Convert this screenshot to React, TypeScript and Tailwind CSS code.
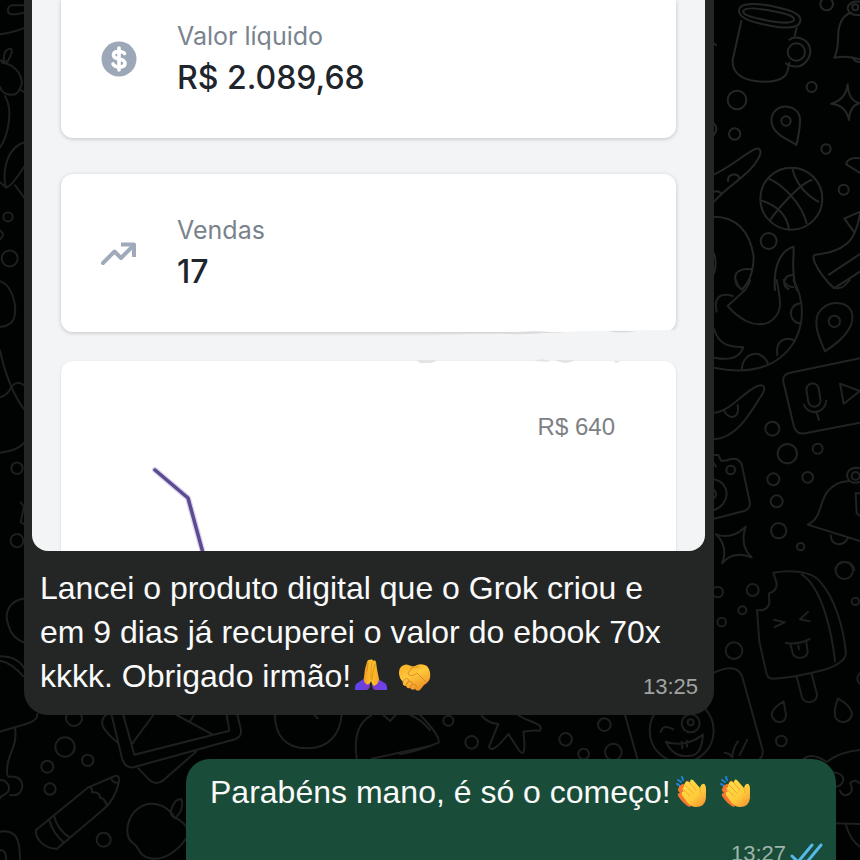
import type { ReactNode } from "react";

/** Doodle wallpaper behind the conversation */
function Wallpaper() {
  return (
    <svg
      className="absolute inset-0 h-full w-full [&_*]:[vector-effect:non-scaling-stroke]"
      viewBox="0 0 860 860"
      preserveAspectRatio="xMidYMid slice"
      fill="none"
      stroke="#1e201f"
      strokeWidth={2}
      strokeLinecap="round"
      strokeLinejoin="round"
      aria-hidden="true"
    >
      {/* mug, pin, ball, star */}
      <g transform="translate(700 0) scale(.33333)" stroke="#252726">
        <path d="M117 30C120 5 180 10 231 22C275 32 305 42 301 63C298 86 258 86 210 77C155 67 115 55 117 30Z" />
        <path d="M130 33C135 20 175 25 220 34C265 42 287 50 281 62C270 74 230 67 185 58C150 51 128 44 130 33Z" />
        <path d="M124 63L98 180C95 217 125 238 165 243C210 250 255 243 263 212L268 188M290 84L284 108" />
        <path d="M268 119C285 105 320 115 329 140C338 172 310 205 280 199C268 196 260 194 258 190" />
        <circle cx="289" cy="156" r="26" />
        <circle cx="380" cy="12" r="19" />
        <circle cx="335" cy="261" r="15" />
        <circle cx="111" cy="300" r="28" />
        <circle cx="104" cy="402" r="17" />
        <circle cx="378" cy="447" r="14" />
        <circle cx="431" cy="569" r="15" />
        <circle cx="206" cy="723" r="24" />
        <path d="M215 368C210 335 237 318 262 320C292 324 301 345 300 365C299 392 294 415 289 435C268 420 219 403 215 368Z" />
        <circle cx="258" cy="363" r="14" />
        <path d="M443 253Q445 302 479 310Q449 317 447 360Q438 315 393 311Q437 300 443 253Z" />
        <path d="M480 178Q440 165 403 173Q415 150 415 95C420 60 435 42 455 38M480 45Q447 48 443 25C445 10 460 2 480 5M480 186Q464 186 457 172" />
        <circle cx="466" cy="22" r="9" />
        <path d="M42 523C80 508 130 465 163 448C180 440 188 453 175 475C150 525 90 550 42 605M84 543C82 520 115 518 117 533M42 575Q58 570 65 583" />
        <circle cx="274" cy="596" r="93" />
        <path d="M205 535C250 555 305 610 320 670M278 509C290 555 320 585 355 605M335 540C300 550 230 630 211 660M186 602C225 615 260 640 267 688" />
        <path d="M42 650C105 650 150 690 161 770C160 820 145 850 126 868C100 855 100 818 120 812C135 804 148 808 155 808M42 760Q52 790 42 820" />
        <path d="M225 870C220 810 235 755 280 740C285 760 270 810 290 870M278 825C250 825 245 858 265 867" />
        <path d="M480 475C455 470 440 480 439 493L480 519M480 635L433 656L464 698Q476 670 480 640M464 698C445 745 390 760 346 764C338 765 340 775 343 785Q360 825 402 865L480 815M387 824L480 762" />
        <path d="M42 370Q56 385 42 405M42 130L48 135" />
      </g>

      {/* donut, card with microphone, camera, bell */}
      <g transform="translate(700 280) scale(.33333)" stroke="#212322">
        <path d="M42 263C100 275 180 280 240 233C310 180 325 80 280 0M42 145C55 200 95 200 130 202C115 240 80 240 42 233" />
        <path d="M230 0C240 55 255 100 205 128C160 145 115 115 83 78L135 30Q150 10 150 0M50 95C40 55 60 35 98 48M108 0Q112 20 128 30M301 70C260 75 265 130 304 130M232 225C225 180 260 168 284 182M125 268C130 210 190 208 205 253M250 0Q258 20 280 22" />
        <path d="M375 214C355 170 340 130 355 100C380 60 435 60 454 93C470 140 420 185 375 214Z" />
        <circle cx="403" cy="124" r="17" />
        <path d="M380 0Q400 35 430 20L450 0M480 235L267 279Q247 285 250 305L282 440Q290 465 315 460L480 428" />
        <rect x="322" y="310" width="37" height="70" rx="18" transform="rotate(-9 341 346)" />
        <path d="M312 375Q320 395 345 397Q375 392 379 362M350 398L357 420M420 311L431 371L480 333Z" />
        <path d="M42 398C90 395 125 340 172 318C195 310 200 325 182 350C145 410 105 475 42 478M72 392C85 420 120 418 113 375" />
        <circle cx="217" cy="446" r="21" />
        <circle cx="262" cy="521" r="29" />
        <circle cx="353" cy="506" r="15" />
        <circle cx="220" cy="598" r="18" />
        <circle cx="323" cy="592" r="16" />
        <circle cx="230" cy="664" r="18" />
        <circle cx="236" cy="752" r="23" />
        <circle cx="302" cy="800" r="11" />
        <path d="M42 525L55 525L63 542C85 545 95 530 112 538Q123 545 126 557L149 665Q153 685 135 692L42 716" />
        <circle cx="92" cy="570" r="13" />
        <path d="M42 598C95 610 90 675 42 690M42 630Q54 643 42 655M42 550L48 560" />
        <path d="M48 763Q95 780 137 740Q118 798 155 832Q100 810 66 850Q86 800 48 763Z" />
        <path d="M480 783L323 734C365 715 355 675 382 635Q410 603 445 604M480 606C440 620 425 570 465 563L480 564M392 766C395 800 430 800 444 774M480 640L467 640L470 700L480 708" />
        <circle cx="467" cy="588" r="12" />
        <path d="M406 870C410 838 460 838 463 870" />
      </g>

      {/* ice lolly and phone */}
      <g transform="translate(700 560) scale(.33333)">
        <path d="M220 38C260 30 335 30 360 65C405 115 430 200 438 280Q435 310 370 330C325 342 260 354 220 356Q205 357 200 342L178 245L171 150Q200 155 208 130L207 100Q232 92 230 70Z" />
        <path d="M305 43C370 85 397 230 405 304M290 350L306 412C315 435 352 430 351 403L335 342" />
        <path d="M222 179L254 187L224 201M324 155L300 178L329 184M257 249Q295 255 329 237M271 252L279 283C292 300 322 295 323 275L319 247M295 257L297 268" />
        <circle cx="53" cy="96" r="16" />
        <circle cx="158" cy="90" r="18" />
        <circle cx="127" cy="151" r="12" />
        <circle cx="65" cy="186" r="13" />
        <circle cx="102" cy="272" r="25" />
        <circle cx="433" cy="31" r="26" />
        <circle cx="466" cy="124" r="11" />
        <circle cx="244" cy="543" r="16" />
        <circle cx="492" cy="356" r="20" />
        <path d="M251 424Q208 450 217 472C228 492 256 492 258 465ZM414 416Q400 450 406 472C420 495 452 488 456 462Q452 435 414 416Z" />
        <path d="M42 338C75 322 112 315 126 348L188 570Q190 590 178 597M74 578Q92 580 97 593Q98 565 114 544M119 585L142 539" />
      </g>

      {/* bottom edge */}
      <g transform="translate(0 700) scale(.33333)">
        <path d="M0 95C60 75 115 70 112 42M45 82C55 145 15 165 22 225M0 240Q18 240 25 255C35 285 5 280 0 295M25 230Q65 225 67 258Q63 290 30 285" />
        <circle cx="222" cy="54" r="24" />
        <circle cx="195" cy="141" r="29" />
        <circle cx="263" cy="181" r="17" />
        <circle cx="142" cy="200" r="18" />
        <circle cx="150" cy="267" r="17" />
        <circle cx="311" cy="419" r="21" />
        <path d="M335 45L366 175Q375 205 400 202L705 118Q728 108 722 85L712 45M370 45L403 164L688 92L680 45M397 130L460 45M530 45L638 104M570 64L582 45M318 45C290 70 315 95 355 130M415 205L450 242Q470 256 490 241L588 155" />
        <path d="M108 390L265 262L345 228Q360 225 357 245Q345 300 308 330L170 447C130 445 105 415 108 390ZM265 262Q278 260 276 277Q300 275 300 293Q315 295 320 315M333 235Q340 250 355 248M147 358Q160 403 191 427M162 348Q175 393 210 413" />
        <path d="M525 355C500 310 450 300 415 325C380 350 370 410 400 430C420 440 410 465 450 475C500 485 545 440 565 405Q565 375 535 358Q505 350 515 325Q525 295 545 298C552 330 535 345 525 355" />
        <path d="M825 45C825 105 855 145 920 145C990 145 1020 100 1025 45M1115 45C1060 75 1065 140 1070 175M1115 176L1290 138M1150 45L1170 63L1187 45M1230 45Q1260 55 1290 90M943 45L953 55" />
        <path d="M0 395C55 385 60 430 60 480M0 450Q20 450 18 480" />
      </g>
      <g transform="translate(400 700) scale(.33333)">
        <path d="M60 45Q120 105 116 128Q50 155 0 163M245 48Q265 70 295 72L267 140Q275 165 325 102L360 155Q380 175 370 95Q400 90 420 92C435 70 380 65 355 45M675 45L712 176" />
        <circle cx="145" cy="62" r="15" />
        <circle cx="215" cy="127" r="19" />
        <circle cx="497" cy="118" r="19" />
        <circle cx="613" cy="74" r="19" />
        <circle cx="640" cy="156" r="25" />
        <circle cx="551" cy="162" r="16" />
        <circle cx="845" cy="92" r="96" />
        <circle cx="872" cy="70" r="27" />
        <circle cx="872" cy="67" r="9" />
        <path d="M782 96Q790 70 820 88M798 125Q855 145 909 104C905 155 890 170 860 168C835 170 810 155 798 125ZM845 125L847 145M860 122L861 140" />
        <path d="M1210 178Q1235 155 1280 186Q1320 155 1380 150M1300 217Q1330 220 1330 240Q1325 262 1300 260M1320 272Q1330 295 1350 280Q1360 270 1352 252M1380 250Q1362 235 1350 250M1300 370L1380 372M1338 375Q1350 420 1380 440" />
      </g>

      {/* left edge, partly hidden by the first bubble */}
      <g transform="scale(.33333 .44643)">
        <path d="M75 12L35 12Q20 15 25 28Q30 36 75 28M0 77Q40 73 75 62M0 135Q10 138 22 138C45 110 35 105 20 112Q10 118 12 138M5 140C55 145 75 180 60 198C50 220 10 215 0 195M15 215C40 245 25 305 0 330M60 200L75 208M75 318C20 330 5 385 18 420Q35 418 75 370M45 415L75 445M0 408L18 420" />
        <ellipse cx="24" cy="486" rx="14" ry="10" />
        <ellipse cx="29" cy="579" rx="24" ry="18" />
        <ellipse cx="51" cy="1049" rx="17" ry="13" />
        <ellipse cx="51" cy="1211" rx="19" ry="15" />
        <path d="M0 517Q18 525 0 536M0 630C45 640 60 710 30 725Q15 733 0 732M0 785Q25 870 75 920M0 890Q25 885 35 865Q55 850 75 865M0 1014Q55 1010 75 990M62 1125L72 1135L62 1170L75 1175M75 1340C30 1345 10 1370 25 1400Q35 1430 75 1440M0 1470Q55 1470 75 1500M0 1480Q35 1485 70 1515" />
      </g>
    </svg>
  );
}

function PrayEmoji() {
  return (
    <svg viewBox="0 0 32 32" className="ml-1 inline-block size-8 align-[-4px]" role="img" aria-label="mãos em oração">
      <defs>
        <linearGradient id="praySkin" x1="0" x2="1">
          <stop offset="0" stopColor="#f29a20" />
          <stop offset=".5" stopColor="#ffc52d" />
          <stop offset="1" stopColor="#f5a623" />
        </linearGradient>
        <linearGradient id="praySleeve" x1="0" x2="1">
          <stop offset="0" stopColor="#5b45f5" />
          <stop offset=".5" stopColor="#7d3cc5" />
          <stop offset="1" stopColor="#6a43f5" />
        </linearGradient>
      </defs>
      <path d="M10 19L1 25Q0 27 0 31H12Q15 30 15 25ZM22 19L31 25Q32 27 32 31H20Q17 30 17 25Z" fill="url(#praySleeve)" />
      <path d="M15 1Q17-1 18 2Q20 0 21 3L22 10L24 20Q24 25 19 27Q17 26 16 22Q14 27 11 25Q8 23 9 18L10 10L12 3Q13 0 15 1Z" fill="url(#praySkin)" />
      <path d="M17 3L16 10L16 20M13 4L12 12M20 5L18 13L17 21" fill="none" stroke="#dc8418" strokeWidth=".8" strokeLinecap="round" />
    </svg>
  );
}

function HandshakeEmoji() {
  return (
    <svg viewBox="0 0 32 32" className="ml-3 inline-block size-8 align-[-5px]" role="img" aria-label="aperto de mãos">
      <defs>
        <linearGradient id="shakeSkin" x1="0" y1="0" x2=".5" y2="1">
          <stop offset="0" stopColor="#f6ad25" />
          <stop offset=".5" stopColor="#ffc83b" />
          <stop offset="1" stopColor="#ef9428" />
        </linearGradient>
      </defs>
      <path
        d="M3 6Q7 3 12 6Q15 7 18 5Q23 3 28 6Q32 11 31 18Q30 22 25 25L21 30Q18 32 16 29Q13 31 11 28Q8 29 7 26Q3 26 4 22Q0 18 0 13Q0 8 3 6Z"
        fill="url(#shakeSkin)"
      />
      <path
        d="M13 8L9 13Q10 17 15 15L18 13L27 22M12 8Q16 6 20 7M4 22Q6 17 9 19Q11 20 7 25Q9 20 13 22Q14 24 11 28Q13 23 17 25Q18 27 16 29"
        fill="none"
        stroke="#d98722"
        strokeWidth=".9"
        strokeLinecap="round"
        strokeLinejoin="round"
      />
    </svg>
  );
}

function ClapEmoji({ className }: { className: string }) {
  return (
    <svg viewBox="0 0 32 32" className={`inline-block size-8 align-[-5px] ${className}`} role="img" aria-label="palmas">
      <defs>
        <linearGradient id="clapFront" x1="0" y1="0" x2=".8" y2="1">
          <stop offset="0" stopColor="#ffe04a" />
          <stop offset=".65" stopColor="#ffca3a" />
          <stop offset="1" stopColor="#f59a32" />
        </linearGradient>
      </defs>
      <path d="M6 9Q8 7 10 9Q10 4 13 5L19 9L19 26L15 31Q9 29 3 20Q2 17 5 17Q1 13 4 12Q3 10 6 9Z" fill="#f5782f" />
      <path d="M10 7Q12 4 15 7Q15 2 18 4L25 12Q26 8 28 8Q30 7 31 12V22Q30 31 21 31Q16 31 12 26L7 19Q6 15 9 16Q6 12 9 11Q9 8 10 7Z" fill="url(#clapFront)" />
      <path d="M15 7L21 14M10 9L18 17M8 13L15 20M25 12L26 17" fill="none" stroke="#eda52f" strokeWidth=".9" strokeLinecap="round" />
      <path d="M2 8L4 9M3 4L6 6M7 1L8 4" stroke="#2182df" strokeWidth="2" strokeLinecap="round" />
    </svg>
  );
}

function DollarIcon() {
  return (
    <svg viewBox="0 0 36 36" className="size-9 shrink-0" aria-hidden="true">
      <circle cx="18" cy="18" r="17.5" fill="#9ca8b8" />
      <path
        d="M23.5 12.5Q22 10.5 18 10.5Q12.5 10.5 12.5 14Q12.5 17 18 18Q24 19 24 22.5Q24 26 18 26Q13.5 26 12 23M18 7V29"
        fill="none"
        stroke="#fff"
        strokeWidth="3.6"
        strokeLinecap="round"
      />
    </svg>
  );
}

function TrendIcon() {
  return (
    <svg viewBox="0 0 36 36" className="size-9 shrink-0" fill="none" stroke="#a0aaba" strokeWidth="4" strokeLinejoin="round" aria-hidden="true">
      <path d="M2 28L13.5 16.5L20 23L32 11" strokeLinecap="round" />
      <path d="M20 9.5H33V22" />
    </svg>
  );
}

function StatCard({ icon, label, value, className }: { icon: ReactNode; label: string; value: string; className: string }) {
  return (
    <div className={`flex items-center gap-10 bg-white px-10 shadow-[0_1px_4px_rgba(0,0,0,0.2)] ${className}`}>
      {icon}
      <dl className="pb-1">
        <dt className="text-[25px] leading-[42px] text-[#79838d]">{label}</dt>
        <dd className="text-[32px] leading-[42px] font-medium text-[#20242b]">{value}</dd>
      </dl>
    </div>
  );
}

function SalesPicture() {
  return (
    <div className="flex h-[551px] flex-col overflow-hidden rounded-b-2xl bg-[#f3f4f6] px-[29px] font-[Inter,sans-serif]">
      <StatCard
        icon={<DollarIcon />}
        label="Valor líquido"
        value="R$ 2.089,68"
        className="h-[138px] shrink-0 rounded-b-xl pb-5"
      />
      <StatCard
        icon={<TrendIcon />}
        label="Vendas"
        value="17"
        className="mt-9 h-[158px] shrink-0 rounded-xl"
      />
      <div className="relative mt-[29px] flex-1 rounded-t-xl bg-white shadow-[0_1px_3px_rgba(0,0,0,0.12)]">
        {/* smudges left between the cards */}
        <svg viewBox="0 0 280 34" className="absolute -top-8 right-0 w-[280px]" aria-hidden="true">
          <path d="M80 5Q150 5 185 2L278 1V31H0V8Z" fill="#f3f4f6" />
          <path d="M110 4Q135 1 155 3Q130 6 110 5ZM212 2H240Q226 5 212 2Z" fill="#dadbdd" />
          <path d="M20 31H41Q38 35 24 34ZM138 32Q148 28 154 33ZM159 31H179Q170 37 159 31ZM218 32H225L220 34Z" fill="#e2e3e5" />
        </svg>
        <p className="mt-12 mr-[61px] text-right font-['Liberation_Sans',Arial,sans-serif] text-2xl leading-9 text-[#7d8185]">
          R$ 640
        </p>
        <svg viewBox="0 0 120 110" className="absolute top-20 left-20 w-[120px]" fill="none" aria-hidden="true">
          <path d="M14 29L47 57L62 112" stroke="#d9d3ef" strokeWidth="6" strokeLinejoin="round" strokeLinecap="round" />
          <path d="M14 29L47 57L62 112" stroke="#5c4b8f" strokeWidth="3.5" strokeLinejoin="round" strokeLinecap="round" />
        </svg>
      </div>
    </div>
  );
}

export default function App() {
  return (
    <main className="relative h-screen overflow-hidden bg-[#010302] font-['Liberation_Sans',Arial,sans-serif]">
      <Wallpaper />
      <div className="relative flex flex-col gap-11 px-6 text-[32px] leading-[44px] text-[#fafafa]">
        <article className="w-full max-w-[690px] rounded-b-3xl bg-[#242625] pr-[9px] pb-3 pl-2">
          <SalesPicture />
          <p className="mt-[15px] pr-8 pl-2">
            Lancei o produto digital que o Grok criou e em 9 dias já recuperei o valor do ebook 70x kkkk. Obrigado irmão!
            <PrayEmoji />
            <HandshakeEmoji />
            <time className="float-right mt-[17px] -mr-[25px] text-[22px] leading-8 text-[#a1a3a2]">13:25</time>
          </p>
        </article>

        <article className="w-full max-w-[650px] self-end rounded-3xl bg-[#194d39] pt-[11px] pr-3 pb-4 pl-6">
          <p>
            Parabéns mano, é só o começo!
            <ClapEmoji className="ml-1" />
            <ClapEmoji className="ml-3" />
          </p>
          <div className="mt-6 flex items-center justify-end gap-1 text-[22px] leading-8 text-[#a0b3aa]">
            <time>13:27</time>
            <svg viewBox="0 0 34 24" className="h-6 w-[34px]" fill="none" stroke="#54b9e9" strokeWidth="3" strokeLinecap="round" strokeLinejoin="round" role="img" aria-label="Lida">
              <path d="M2 14L8 20L22 3M15 19L17 20L31 3" />
            </svg>
          </div>
        </article>
      </div>
    </main>
  );
}
